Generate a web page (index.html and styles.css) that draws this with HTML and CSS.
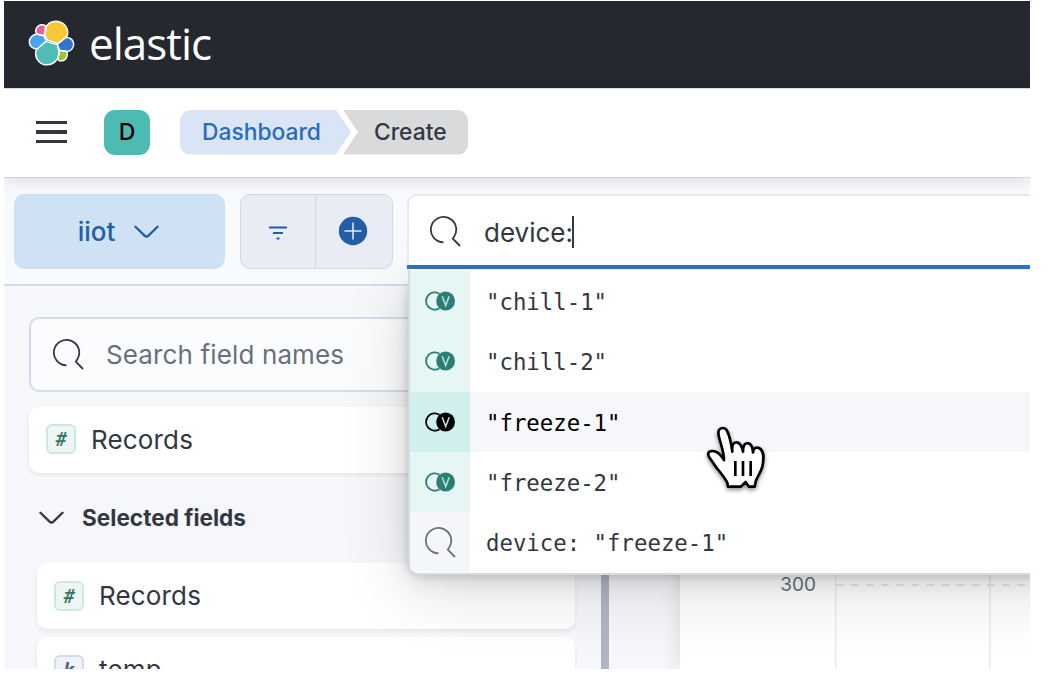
FILE: index.html
```html
<!DOCTYPE html>
<html lang="en">
<head>
<meta charset="utf-8">
<title>Elastic - Create dashboard</title>
<link rel="stylesheet" href="styles.css">
</head>
<body>
<svg class="defs" width="0" height="0">
  <symbol id="search" viewBox="0 0 32 32"><path d="M14.500 27.300A12.700 12.700 0 1 1 25.200 21.500L23.800 23.700L31 31" fill="none" stroke="currentColor" stroke-width="1.800"/></symbol>
  <symbol id="chevron" viewBox="0 0 26 14"><path d="M1.500 1.500L11 10.700Q13 12.600 15 10.700L24.500 1.500" fill="none" stroke="currentColor" stroke-width="2.400" stroke-linecap="round"/></symbol>
  <symbol id="value" viewBox="0 0 30 20"><path d="M14.500 2.700A8.700 8.700 0 1 0 14.500 17.300" fill="none" stroke="currentColor" stroke-width="1.800"/><circle cx="20.600" cy="10" r="9.400" fill="currentColor"/><path d="M17.200 5.200L20.700 14.500L24.200 5.200" fill="none" stroke="#b9dcd9" stroke-width="1.600"/></symbol>
</svg>
<div class="shell">
  <header class="brand">
    <svg class="brand-mark" viewBox="84 54 142 144" stroke="#fff" stroke-width="4.500" stroke-linejoin="round">
      <path fill="#f6c937" d="M138 80C142 68 155 60 168 60C188 60 204 76 204 95C204 105 199 112 190 118L173 128L143 117L135 103Z"/>
      <path fill="#4fbcb5" d="M138 121L172 131L177 150C179 176 162 192 142 192C121 192 107 176 107 158C107 150 110 144 114 141Z"/>
      <path fill="#3175ca" d="M199 109C213 109 222 118 222 130C222 142 212 150 202 152L180 148L172 130Z"/>
      <path fill="#4aa3ef" d="M112 99L133 105L139 120L112 144C98 143 88 135 88 122C88 110 99 100 112 99Z"/>
      <path fill="#e65e9f" d="M137 74C128 68 116 70 110 80C106 88 108 96 112 99L133 104L137 77Z"/>
      <path fill="#9bc834" d="M178 149L201 152C206 165 199 180 184 180C180 181 176 178 173 175L178 160Z"/>
    </svg>
    <span class="brand-name">elastic</span>
  </header>
  <nav class="nav">
    <div class="menu"><i></i><i></i><i></i></div>
    <div class="space">D</div>
    <div class="crumbs"><a class="crumb crumb-link">Dashboard</a><span class="crumb crumb-current">Create</span></div>
  </nav>
  <main class="app">
    <section class="toolbar">
      <div class="view"><span>iiot</span><svg class="chev"><use href="#chevron"/></svg></div>
      <div class="filters">
        <div class="filter"><svg width="20" height="16" viewBox="0 0 20 16"><path d="M1 2.500H19M5 8H15M8.500 13.500H11.500" stroke="#225da5" stroke-width="2"/></svg></div>
        <div class="filter"><svg width="30" height="30" viewBox="0 0 30 30"><circle cx="15" cy="15" r="14.200" fill="#225da5"/><path d="M15 6.500V23.500M6.500 15H23.500" stroke="#e9ecf5" stroke-width="1.500"/></svg></div>
      </div>
      <div class="query">
        <svg class="glass"><use href="#search"/></svg><span>device:</span><i class="caret"></i>
        <div class="suggest">
          <div class="row"><b class="kind"><svg><use href="#value"/></svg></b><span>"chill-1"</span></div>
          <div class="row"><b class="kind"><svg><use href="#value"/></svg></b><span>"chill-2"</span></div>
          <div class="row active"><b class="kind"><svg><use href="#value"/></svg></b><span>"freeze-1"</span></div>
          <div class="row"><b class="kind"><svg><use href="#value"/></svg></b><span>"freeze-2"</span></div>
          <div class="row recent"><b class="kind"><svg><use href="#search"/></svg></b><span>device: "freeze-1"</span></div>
        </div>
      </div>
    </section>
    <section class="workspace">
      <aside class="fields">
        <div class="field-search"><svg class="glass"><use href="#search"/></svg><span>Search field names</span></div>
        <div class="field all"><b class="token">#</b><span>Records</span></div>
        <h3 class="group"><svg class="chev"><use href="#chevron"/></svg><span>Selected fields</span></h3>
        <div class="field"><b class="token">#</b><span>Records</span></div>
        <div class="field"><b class="token keyword">k</b><span>temp</span></div>
      </aside>
      <div class="resizer"></div>
      <div class="chart">
        <span class="tick">300</span>
        <svg class="grid" width="195" height="383" viewBox="0 0 195 383"><path d="M.5 0V383M155 0V383" stroke="#e6e8f1" stroke-width="1.500"/><path d="M1 299H195" stroke="#e6e7ec" stroke-width="2" stroke-dasharray="7.500 7.600"/></svg>
      </div>
    </section>
  </main>
  <svg class="pointer" viewBox="912 162 198 216">
    <path d="M984 350L982 338C975 325 965 312 955 300C945 288 940 278 932 268C925 259 921 252 927 246C937 240 950 245 958 252C964 258 968 263 972 270C972 250 965 230 960 212C957 200 952 190 957 180C962 172 975 172 980 180C988 195 993 215 997 245C995 225 1000 216 1010 217C1022 218 1026 230 1029 245C1029 225 1035 218 1045 220C1055 222 1058 232 1059 247C1060 235 1067 230 1077 234C1092 242 1093 260 1087 290C1082 310 1070 322 1067 335L1064 350L1047 350L1037 336L1022 350Z" fill="#fff" stroke="#000" stroke-width="8" stroke-linejoin="round"/>
    <path d="M1006 273V318M1029 273V318M1052 273V318" stroke="#000" stroke-width="8"/>
  </svg>
</div>
</body>
</html>
```
FILE: styles.css
```css
* { box-sizing: border-box; }
body { margin: 0; background: #fff; color: #343741; font-family: Inter, "Liberation Sans", sans-serif; font-size: 26px; }
svg { display: block; flex: none; }
.defs { position: absolute; }
.shell { position: relative; display: flex; flex-direction: column; width: 1026px; height: 668px; margin: 1px 0 0 4px; overflow: hidden; }

.brand { display: flex; align-items: center; flex: none; height: 87px; padding: 0 0 4px 24px; background: #25282f; }
.brand-mark { width: 47px; height: 48px; }
.brand-name { margin: 0 0 0 14px; color: #fff; font: 400 44px/48px "Open Sans", sans-serif; letter-spacing: -1px; }

.nav { position: relative; z-index: 2; display: flex; align-items: center; flex: none; height: 90px; padding: 0 0 2px 32px; border-top: 1px solid #d3dae6; border-bottom: 1px solid #cdd3df; background: #fff; box-shadow: 0 2px 16px rgba(0, 0, 0, .14); }
.menu { display: flex; flex-direction: column; gap: 6px; width: 31px; }
.menu i { height: 3.500px; background: #343741; }
.space { width: 46px; height: 45px; margin-left: 37px; border-radius: 11px; background: #4dbab3; color: #000; font-size: 23px; font-weight: 500; line-height: 45px; text-align: center; }
.crumbs { display: flex; margin-left: 30px; }
.crumb { height: 45px; font-size: 22.800px; font-weight: 500; line-height: 44px; }
.crumb-link { width: 171px; padding-left: 22px; border-radius: 11px 0 0 11px; background: #d9e5f5; color: #2a6bbb; clip-path: polygon(0 0, 156px 0, 100% 50%, 156px 100%, 0 100%); }
.crumb-current { width: 125px; margin-left: -8px; padding-left: 31px; border-radius: 0 11px 11px 0; background: #d9dadc; clip-path: polygon(0 0, 100% 0, 100% 100%, 0 100%, 15px 50%); }

.app { display: flex; flex: 1; flex-direction: column; min-height: 0; background: #f5f7fb; }
.toolbar { position: relative; z-index: 1; display: flex; flex: none; height: 108px; padding: 16px 0 0 10px; border-bottom: 2px solid #d5dce8; background: #f9fafe; }
.view { display: flex; align-items: center; justify-content: center; gap: 19px; width: 211px; height: 75px; padding-right: 2px; border-radius: 10px; background: #cfe2f3; color: #225da5; font-weight: 500; }
.chev { width: 25px; height: 14px; }
.filters { display: flex; width: 153px; height: 75px; margin-left: 15px; border: 1.500px solid #d3d7e6; border-radius: 10px; background: #e9ecf5; }
.filter { display: flex; flex: 1 1 0; align-items: center; justify-content: center; padding-bottom: 1px; }
.filter:first-child { padding: 2px 0 0; }
.filter + .filter { border-left: 1px solid #d3d7e6; padding-right: 2px; }
.query { position: relative; display: flex; flex: 1; align-items: center; height: 75px; margin-left: 14px; padding-left: 20px; border: 2px solid #e6e9f3; border-right: 0; border-bottom: 0; border-radius: 10px 0 0 0; background: #fff; }
.query::before { content: ""; position: absolute; bottom: 0; left: -2px; right: 0; height: 4px; background: #2b70c5; z-index: 1; }
.glass { width: 32px; height: 32px; }
.query > span { margin: 0 0 0 23px; }
.query > .glass { margin-top: -3px; }
.caret { width: 2px; height: 32px; margin: -2px 0 0 -1px; background: #343741; }

.suggest { position: absolute; top: 74px; left: -1px; width: 640px; height: 305px; padding-top: 1px; border: 2px solid #d3dae6; border-top: 0; border-radius: 0 0 10px 10px; background: #fff; overflow: hidden; font: 22.350px "DejaVu Sans Mono", monospace; }
.query::after { content: ""; position: absolute; z-index: -1; top: 84px; left: 0; width: 720px; height: 293px; border-radius: 10px; box-shadow: 0 2px 8px rgba(0, 0, 0, .16), 0 6px 24px rgba(0, 0, 0, .13), 0 16px 70px rgba(0, 0, 0, .14); }
.row { display: flex; align-items: center; height: 60.300px; }
.row span { margin-left: 16px; padding-top: 2px; white-space: pre; }
.kind { display: flex; align-items: center; justify-content: center; width: 60px; height: 100%; background: #e6f6f5; color: #2e7d75; }
.kind svg { width: 30px; height: 20px; }
.active { background: #f5f7fb; color: #000; }
.active .kind { background: #d1efed; color: #000; }
.recent .kind { background: #f5f6f9; color: #69707d; }
.recent .kind svg { width: 32px; height: 32px; }

.workspace { display: flex; flex: 1; min-height: 0; }
.fields { width: 571px; padding: 31px 0 0 25px; flex: none; }
.field-search { display: flex; align-items: center; height: 75px; padding: 0 0 1px 21px; border: 2px solid #d6daea; border-radius: 10px; background: #fbfcfe; color: #69707d; }
.field-search .glass { color: #343741; }
.field-search span { margin-left: 22px; letter-spacing: .13px; }
.field { display: flex; align-items: center; height: 66px; margin: 0 0 8px 8px; padding: 0 0 1px 17px; border-radius: 10px; background: #fff; box-shadow: 0 2px 4px rgba(0, 0, 0, .07); }
.field.all { margin: 15px 0 0; padding: 0 0 2px 17px; }
.field span { margin-left: 15px; letter-spacing: .15px; }
.token { width: 30px; height: 30px; border: 2px solid #cfe6dd; border-radius: 6px; background: #edf6f3; color: #387765; font: italic 700 20px/27px Roboto, "Open Sans", sans-serif; text-align: center; }
.keyword { border-color: #cfdceb; background: #eff3f9; color: #49698f; }
.group { display: flex; align-items: center; height: 90px; margin: 0; padding: 0 0 1px 10px; font-size: 22.600px; font-weight: 700; }
.group span { margin-left: 18px; }
.resizer { width: 8px; margin-left: 26px; background: #b1b5c1; }
.chart { display: flex; flex: 1; margin-left: 71px; background: #fff; box-shadow: 0 0 20px rgba(0, 0, 0, .12); }
.tick { width: 136px; margin: 286px 19px 0 0; color: #69707d; font-size: 19px; line-height: 26px; text-align: right; }
.pointer { position: absolute; z-index: 3; top: 423px; left: 700px; width: 66px; height: 72px; overflow: visible; filter: drop-shadow(0 2px 2px rgba(0, 0, 0, .45)); }
```
